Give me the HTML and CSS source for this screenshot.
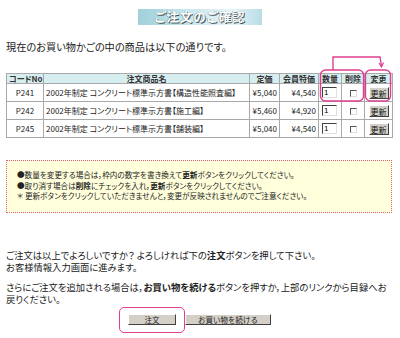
FILE: index.html
```html
<!DOCTYPE html>
<html lang="ja">
<head>
    <meta charset="UTF-8">
    <title>ご注文のご確認</title>
    <link rel="stylesheet" href="styles.css">
</head>
<body>
    <div class="page">
        <div class="title"><span>ご注文のご確認</span></div>

        <p class="intro">現在のお買い物かごの中の商品は以下の通りです。</p>

        <div class="cart">
            <table class="items">
                <tr>
                    <th class="c-code">コードNo</th>
                    <th class="c-name">注文商品名</th>
                    <th class="c-price">定価</th>
                    <th class="c-member">会員特価</th>
                    <th class="c-qty">数量</th>
                    <th class="c-del">削除</th>
                    <th class="c-upd">変更</th>
                </tr>
                <tr>
                    <td class="center">P241</td>
                    <td>2002年制定 コンクリート標準示方書【構造性能照査編】</td>
                    <td class="num">¥5,040</td>
                    <td class="num">¥4,540</td>
                    <td><input class="qty" type="text" value="1"></td>
                    <td class="center"><span class="check"></span></td>
                    <td class="center"><button class="upd">更新</button></td>
                </tr>
                <tr>
                    <td class="center">P242</td>
                    <td>2002年制定 コンクリート標準示方書【施工編】</td>
                    <td class="num">¥5,460</td>
                    <td class="num">¥4,920</td>
                    <td><input class="qty" type="text" value="1"></td>
                    <td class="center"><span class="check"></span></td>
                    <td class="center"><button class="upd">更新</button></td>
                </tr>
                <tr>
                    <td class="center">P245</td>
                    <td>2002年制定 コンクリート標準示方書【舗装編】</td>
                    <td class="num">¥5,040</td>
                    <td class="num">¥4,540</td>
                    <td><input class="qty" type="text" value="1"></td>
                    <td class="center"><span class="check"></span></td>
                    <td class="center"><button class="upd">更新</button></td>
                </tr>
            </table>

            <!-- 注目マーク -->
            <svg class="marks" width="400" height="60" viewBox="0 0 400 60">
                <rect x="320.5" y="15" width="43" height="31" rx="5" fill="none" stroke="#df3f8f" stroke-width="1.4"/>
                <rect x="365.5" y="15" width="25" height="31" rx="5" fill="none" stroke="#df3f8f" stroke-width="1.4"/>
                <polyline points="333,15 333,2 380,2 381.5,11" fill="none" stroke="#df3f8f" stroke-width="1.4"/>
                <polyline points="379,8 381.5,12 383.5,7.5" fill="none" stroke="#df3f8f" stroke-width="1.2"/>
            </svg>
        </div>

        <div class="notice">
            <p>●数量を変更する場合は，枠内の数字を書き換えて<b>更新</b>ボタンをクリックしてください。</p>
            <p>●取り消す場合は<b>削除</b>にチェックを入れ，<b>更新</b>ボタンをクリックしてください。</p>
            <p>＊ 更新ボタンをクリックしていただきませんと，変更が反映されませんのでご注意ください。</p>
        </div>

        <div class="confirm">
            <p>ご注文は以上でよろしいですか？ よろしければ下の<b>注文</b>ボタンを押して下さい。<br>お客様情報入力画面に進みます。</p>
            <p>さらにご注文を追加される場合は，<b>お買い物を続ける</b>ボタンを押すか，上部のリンクから目録へお戻りください。</p>
        </div>

        <div class="actions">
            <span class="focus"><button class="btn btn-order">注文</button></span>
            <button class="btn btn-cont">お買い物を続ける</button>
        </div>
    </div>
</body>
</html>
```

FILE: styles.css
```css
body {
    margin: 0;
    background: #ffffff;
    color: #222222;
    font-family: "Noto Sans CJK JP", "Liberation Sans", sans-serif;
    font-feature-settings: "palt";
}
.page {
    width: 400px;
    padding-top: 9px;
}
.title {
    display: flex;
    justify-content: center;
}
.title span {
    width: 124px;
    height: 16px;
    line-height: 16px;
    text-align: center;
    font-size: 12.5px;
    font-weight: bold;
    letter-spacing: 1px;
    color: #ffffff;
    text-shadow: 1px 1px 0 #45555a, -0.5px 0 0 #6d7f84;
    background: linear-gradient(90deg, #9fd0da 0%, #c7e6ec 40%, #e6f4f7 75%, #b8dde5 100%);
}
.intro {
    margin: 15px 0 0 6px;
    font-size: 10.2px;
    line-height: 13px;
}

/* カート表 */
.cart {
    position: relative;
    margin-top: 20px;
}
.items {
    margin-left: 6px;
    width: 387px;
    border-collapse: collapse;
    font-size: 8px;
    table-layout: fixed;
}
.items th,
.items td {
    border: 1px solid #a9a9a9;
    padding: 0 2px;
    height: 17px;
    white-space: nowrap;
    overflow: hidden;
}
.items th {
    height: 9px;
    line-height: 9px;
    background: #d7eef1;
    font-weight: bold;
    color: #333333;
}
.c-code { width: 32px; }
.c-price { width: 25px; }
.c-member { width: 34px; }
.c-qty { width: 18px; }
.c-del { width: 18px; }
.c-upd { width: 23px; }
.center { text-align: center; }
.num { text-align: right; }
.qty {
    display: block;
    width: 15px;
    height: 11px;
    box-sizing: border-box;
    margin: 0 0 0 1px;
    padding: 0 1px;
    font: 8px "Liberation Sans", sans-serif;
    border: 1px solid;
    border-color: #404040 #e0e0e0 #e0e0e0 #404040;
    background: #ffffff;
}
.check {
    display: inline-block;
    width: 7px;
    height: 7px;
    box-sizing: border-box;
    border: 1px solid;
    border-color: #555555 #dddddd #dddddd #555555;
    background: #ffffff;
    vertical-align: middle;
}
.upd {
    width: 20px;
    height: 12px;
    padding: 0;
    font: 8px "Noto Sans CJK JP", sans-serif;
    color: #111111;
    background: #d4d0c8;
    border: 1px solid;
    border-color: #ffffff #404040 #404040 #ffffff;
}
.marks {
    position: absolute;
    left: 0;
    top: -18px;
    pointer-events: none;
}

/* 注意書き */
.notice {
    margin: 22px 8px 0 6px;
    padding: 9px 10px 10px;
    background: #ffffdc;
    border: 1px dotted #d9607a;
    font-size: 7.6px;
    line-height: 10.5px;
}
.notice p {
    margin: 0;
}

.confirm {
    margin: 36px 8px 0 6px;
    font-size: 9.3px;
    line-height: 12px;
}
.confirm p {
    margin: 0 0 8px;
}
.confirm p:last-child {
    margin-bottom: 0;
}

.actions {
    display: flex;
    justify-content: center;
    align-items: center;
    gap: 8px;
    margin-top: 2px;
}
.focus {
    display: flex;
    justify-content: center;
    align-items: center;
    width: 64px;
    height: 24px;
    margin-left: -10px;
    margin-right: -8px;
    border: 1.4px solid #df3f8f;
    border-radius: 5px;
}
.btn {
    height: 11px;
    padding: 0;
    font: 7.5px "Noto Sans CJK JP", sans-serif;
    color: #222222;
    background: #d4d0c8;
    border: 1px solid;
    border-color: #ffffff #404040 #404040 #ffffff;
    line-height: 9px;
}
.btn-order { width: 48px; }
.btn-cont { width: 86px; }
```
